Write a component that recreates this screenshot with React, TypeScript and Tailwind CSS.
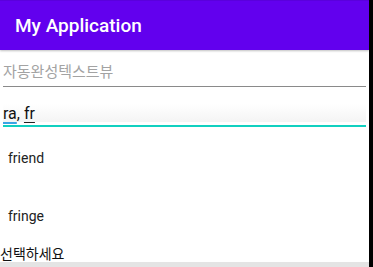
import React from "react";

const latin = { fontFamily: 'Roboto, "Noto Sans CJK KR", sans-serif' };

export default function App() {
  return (
    <div className="flex w-[373px] h-[267px] bg-black overflow-hidden" style={latin}>
      <div className="flex flex-col w-[369px] h-[267px] bg-white">
        <div className="h-[50px] bg-[#6200ee] border-t border-[#5a00dc] flex items-center pl-[15px] shadow-[0_1px_2px_rgba(0,0,0,0.25)] z-10">
          <span className="text-white text-[19px] font-medium leading-none">My Application</span>
        </div>
        <div className="px-[3px] pt-[9px]">
          <div className="h-[27px] flex items-center text-[15px] text-[#a3a3a3] leading-none">자동완성텍스트뷰</div>
          <div className="h-px bg-[#8a8a8a]" />
        </div>
        <div className="px-[3px] pt-[17px]">
          <div className="h-[18px] flex items-end text-[16px] text-[#111] leading-none bg-gradient-to-b from-white to-[#f4f4f4]">
            <span className="underline decoration-[#3ba4e4] decoration-2 underline-offset-[3px]">ra</span>
            <span>,&nbsp;</span>
            <span className="underline decoration-[#222] decoration-1 underline-offset-[3px]">fr</span>
          </div>
          <div className="h-[2px] mt-[3px] bg-[#11d0c0]" />
        </div>
        <div className="flex flex-col pt-[2px]">
          <div className="h-[58px] flex items-center pl-[8px] text-[14px] text-[#222]">friend</div>
          <div className="h-[58px] flex items-center pl-[8px] text-[14px] text-[#222]">fringe</div>
        </div>
        <div className="h-[17px] flex items-center text-[14px] text-[#111] leading-none">선택하세요</div>
        <div className="flex-1 bg-[#e4e4e4]" />
      </div>
    </div>
  );
}
